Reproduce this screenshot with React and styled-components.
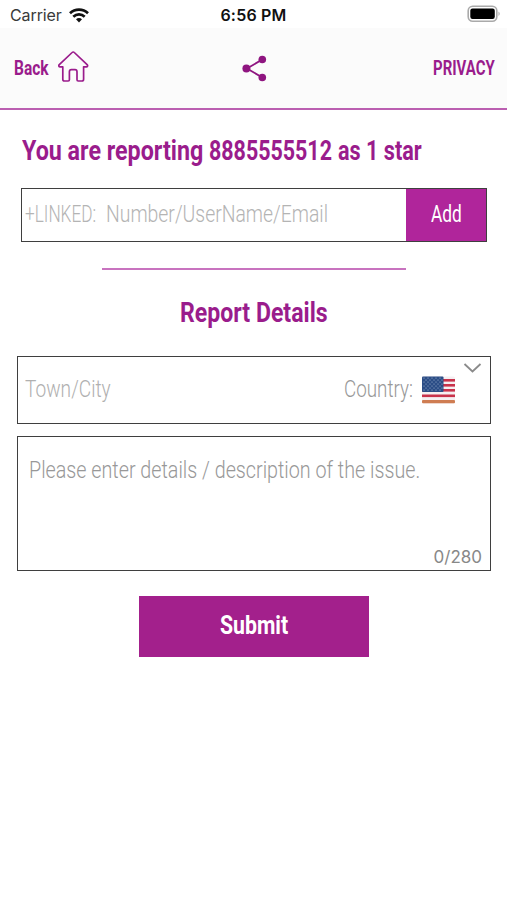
import React, {useLayoutEffect, useRef, useState} from 'react';
import styled, {createGlobalStyle} from 'styled-components';

const GlobalStyle = createGlobalStyle`
    * {
        box-sizing: border-box;
    }

    body {
        margin: 0;
        background: #fff;
        font-family: Roboto, "Liberation Sans", sans-serif;
    }

    button {
        font: inherit;
        padding: 0;
        border: 0;
        cursor: pointer;
    }
`;

const Page = styled.div`
    width: 507px;
    min-height: 900px;
    background: #fff;
    overflow: hidden;
`;

const StatusBar = styled.div`
    display: grid;
    grid-template-columns: 1fr auto 1fr;
    align-items: center;
    height: 28px;
    padding: 2px 10px 0 10px;
    font-family: Inter, sans-serif;
    font-size: 16px;
    line-height: 26px;
    color: #111;
`;

const Carrier = styled.div`
    display: flex;
    align-items: center;
    gap: 7px;
    letter-spacing: -0.1px;
    color: #3a3a3a;
`;

const Clock = styled.div`
    font-weight: 600;
    letter-spacing: 0.2px;
`;

const Battery = styled.svg`
    justify-self: end;
    margin: -2px -4px 0 0;
`;

const NavBar = styled.nav`
    display: grid;
    grid-template-columns: 1fr auto 1fr;
    align-items: center;
    height: 82px;
    padding: 0 12px 0 14px;
    background: #fbfbfb;
    border-bottom: 2px solid #bb5fb1;
`;

const NavButton = styled.button`
    display: flex;
    align-items: center;
    gap: 9px;
    background: none;
    color: #9a1c8c;
    justify-self: ${({$end}) => $end ? 'end' : 'start'};
`;

const Form = styled.form`
    display: flex;
    flex-direction: column;
    padding: 20px 16px 0 17px;
`;

const Title = styled.h2`
    margin: ${({$center}) => $center ? '22px auto 0' : '0 0 17px 5px'};
    height: ${({$center}) => $center ? '42px' : '41px'};
    display: flex;
    align-items: center;
    gap: 6px;
    color: #9a1c8c;
`;

const LinkedRow = styled.div`
    display: flex;
    height: 54px;
    margin: 0 4px 0 4px;
    border: 1px solid #3f3f3f;
`;

const Field = styled.div`
    flex: 1;
    display: flex;
    align-items: center;
    gap: 10px;
    padding: 0 0 2px 3px;
`;

const AddButton = styled.button`
    width: 80px;
    display: flex;
    align-items: center;
    justify-content: center;
    padding-bottom: 2px;
    background: #b0259b;
    color: #fff;
`;

const Divider = styled.hr`
    width: 304px;
    height: 2px;
    margin: 26px 0 0 85px;
    border: 0;
    background: #c873bf;
`;

const PlaceRow = styled.div`
    display: flex;
    align-items: center;
    height: 68px;
    padding: 0 9px 3px 7px;
    border: 1px solid #3f3f3f;
    margin-top: 22px;
`;

const CountryPicker = styled.div`
    display: flex;
    align-items: center;
    gap: 9px;
    margin-left: auto;
`;

const Flag = styled.svg`
    margin-top: 2px;
`;

const Chevron = styled.svg`
    align-self: flex-start;
    margin: 6px -1px 0 8px;
`;

const Details = styled.div`
    display: flex;
    flex-direction: column;
    justify-content: space-between;
    height: 135px;
    margin-top: 12px;
    padding: 17px 8px 2px 11px;
    border: 1px solid #3f3f3f;
`;

const Counter = styled.span`
    align-self: flex-end;
    font-family: Inter, sans-serif;
    font-size: 17px;
    line-height: 22px;
    color: #888;
`;

const SubmitButton = styled.button`
    display: flex;
    align-items: center;
    justify-content: center;
    width: 230px;
    height: 61px;
    margin: 25px 0 0 122px;
    padding-bottom: 2px;
    background: #a3208c;
    color: #fff;
`;

const NarrowBox = styled.span`
    display: inline-block;
    flex: none;
    text-align: left;
    line-height: 32px;
    height: 32px;
    width: ${({$width}) => $width}px;
`;

const NarrowInner = styled.span`
    display: inline-block;
    white-space: pre;
    transform-origin: left center;
    font-size: ${({$size}) => $size}px;
    font-weight: ${({$weight}) => $weight};
    color: ${({$color}) => $color || 'inherit'};
`;

// condensed lettering: squeezes a line of text to the width it is given
const Narrow = ({width, size, weight = 300, color, children}) => {
    const ref = useRef(null);
    const [scale, setScale] = useState(1);

    useLayoutEffect(() => {
        setScale(width / ref.current.offsetWidth)
    }, [width, size, weight, children])

    return (
        <NarrowBox $width={width}>
            <NarrowInner ref={ref} $size={size} $weight={weight} $color={color}
                style={{transform: `scaleX(${scale})`}}>
                {children}
            </NarrowInner>
        </NarrowBox>
    )
};

const WifiIcon = () => (
    <svg width="20" height="15" viewBox="0 0 20 15" fill="none" stroke="#111" strokeWidth="2.7">
        <path d="M1 5.2C6 .4 14 .4 19 5.2" />
        <path d="M4.3 8.7c3.2-3 8.2-3 11.4 0" />
        <path d="M7 11.2c1.7-1.5 4.3-1.5 6 0L10 14.4z" fill="#111" stroke="none" />
    </svg>
);

const HomeIcon = () => (
    <svg width="31" height="34" viewBox="0 0 31 34" fill="none" stroke="#9a1c8c" strokeWidth="1.7"
        strokeLinejoin="round" strokeLinecap="round">
        <path d="M14.1 1.5 1.3 13.6c-1 1-.4 2.2.8 2.2h2.7v12.4c0 1.1.7 1.8 1.8 1.8h3.6c.8 0 1.2-.5 1.2-1.2v-8c0-1.3.8-2.1 2-2.1h3.6c1.2 0 2 .8 2 2.1v8c0 .7.4 1.2 1.2 1.2h3.6c1.1 0 1.8-.7 1.8-1.8V15.8h2.7c1.2 0 1.8-1.2.8-2.2L16.3 1.5c-.7-.7-1.5-.7-2.2 0z" />
    </svg>
);

const ShareIcon = () => (
    <svg width="26" height="28" viewBox="0 0 26 28" fill="#8f1580" stroke="#8f1580">
        <path d="M20.3 5.5 5 14.5l15.3 9" fill="none" strokeWidth="1.8" />
        <circle cx="4.4" cy="14.5" r="4" stroke="none" />
        <circle cx="20.3" cy="5.5" r="3.8" stroke="none" />
        <circle cx="20.3" cy="23.5" r="3.8" stroke="none" />
    </svg>
);

const stars = [];
for (let row = 0; row < 7; row++) {
    for (let col = 0; col < 5; col++) {
        stars.push([2 + col * 4 + (row % 2) * 2, 2 + row * 2]);
    }
}

const FlagIcon = () => (
    <Flag width="33" height="28" viewBox="0 0 33 28">
        <rect width="33" height="27" y=".5" rx="1.5" fill="#f5eff2" />
        {[3, 8, 13, 18.5].map((y) => (
            <rect key={y} y={y} width="33" height="2.6" fill="#c8324b" />
        ))}
        <rect y="24" width="33" height="3.2" rx="1" fill="#cf7d52" />
        <rect y=".5" width="21.5" height="15.5" rx="1" fill="#2b4d86" />
        {stars.map(([x, y]) => (
            <circle key={`${x}-${y}`} cx={x} cy={y} r=".6" fill="#a9bbd6" />
        ))}
    </Flag>
);

export default function App() {
    return (
        <Page>
            <GlobalStyle />
            <StatusBar>
                <Carrier>
                    Carrier
                    <WifiIcon />
                </Carrier>
                <Clock>6:56 PM</Clock>
                <Battery width="34" height="18" viewBox="0 0 34 18">
                    <rect x="1.2" y="1.2" width="28.6" height="15" rx="4.5" fill="#fff" stroke="#aaa" strokeWidth="1.6" />
                    <rect x="3.3" y="3.5" width="24.5" height="10.5" rx="2.2" fill="#000" />
                    <path d="M31.5 6.5c1.6.8 1.6 3.7 0 4.5z" fill="#aaa" />
                </Battery>
            </StatusBar>
            <NavBar>
                <NavButton>
                    <Narrow width={35} size={20} weight={700}>Back</Narrow>
                    <HomeIcon />
                </NavButton>
                <ShareIcon />
                <NavButton $end>
                    <Narrow width={62} size={20} weight={700}>PRIVACY</Narrow>
                </NavButton>
            </NavBar>
            <Form onSubmit={(e) => e.preventDefault()}>
                <Title>
                    <Narrow width={181} size={27} weight={700}>You are reporting</Narrow>
                    <Narrow width={123} size={27} weight={700}>8885555512</Narrow>
                    <Narrow width={84} size={27} weight={700}>as 1 star</Narrow>
                </Title>
                <LinkedRow>
                    <Field>
                        <Narrow width={71} size={24} color="#b4b4b4">+LINKED:</Narrow>
                        <Narrow width={222} size={24} color="#b4b4b4">Number/UserName/Email</Narrow>
                    </Field>
                    <AddButton type="button">
                        <Narrow width={31} size={24} weight={400}>Add</Narrow>
                    </AddButton>
                </LinkedRow>
                <Divider />
                <Title $center>
                    <Narrow width={148} size={27} weight={700}>Report Details</Narrow>
                </Title>
                <PlaceRow>
                    <Narrow width={86} size={24} color="#b0b0b0">Town/City</Narrow>
                    <CountryPicker>
                        <Narrow width={69} size={24} color="#989898">Country:</Narrow>
                        <FlagIcon />
                    </CountryPicker>
                    <Chevron width="19" height="10" viewBox="0 0 19 10" fill="none" stroke="#8a8a8a" strokeWidth="1.8">
                        <path d="M1.5 1l8 7.5 8-7.5" />
                    </Chevron>
                </PlaceRow>
                <Details>
                    <Narrow width={391} size={24} color="#989898">Please enter details / description of the issue.</Narrow>
                    <Counter>0/280</Counter>
                </Details>
                <SubmitButton>
                    <Narrow width={68} size={25} weight={700}>Submit</Narrow>
                </SubmitButton>
            </Form>
        </Page>
    )
}
